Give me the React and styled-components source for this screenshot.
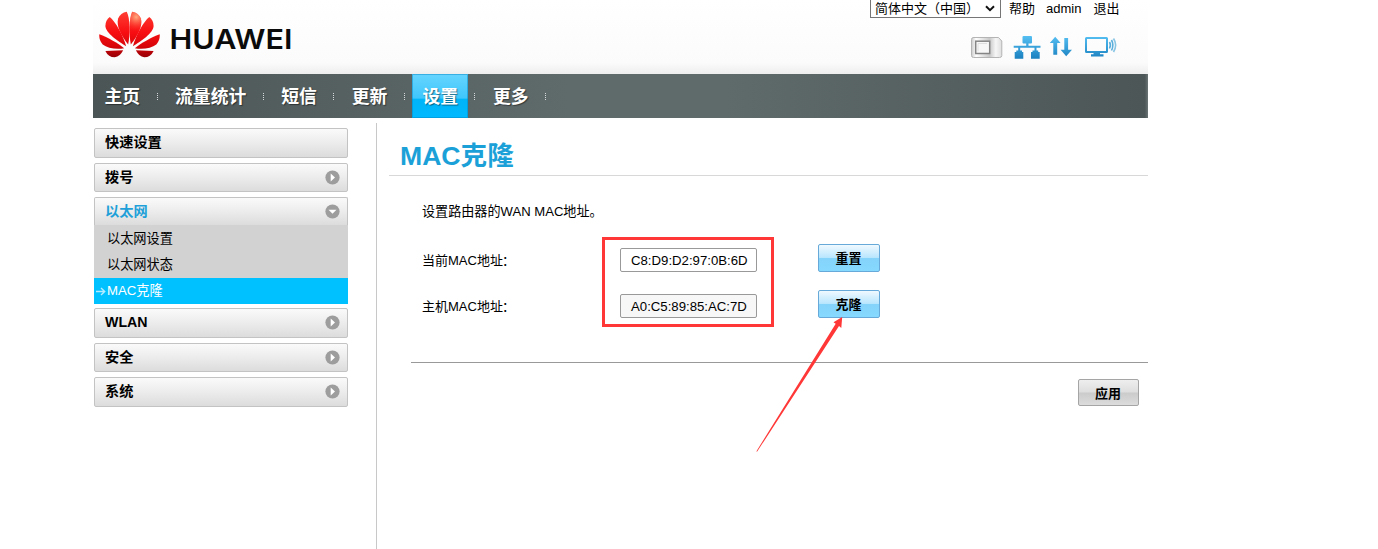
import React from "react";
import styled, { createGlobalStyle } from "styled-components";

const Global = createGlobalStyle`
  * { box-sizing: border-box; }
  html, body { margin: 0; padding: 0; background: #fff; overflow: hidden; }
  body { font: 13px "Liberation Sans", "Noto Sans CJK SC", sans-serif; color: #000; }
`;

const Page = styled.div`
  position: relative;
  width: 1055px;
  height: 549px;
  margin-left: 93px;
  display: flex;
  flex-direction: column;
`;

const Header = styled.header`
  height: 74px;
  display: flex;
  justify-content: space-between;
  background: linear-gradient(#fff, #fbfbfb 85%, #eeeeee);
`;

const Logo = styled.div`
  display: flex;
  align-items: flex-start;
  padding: 11px 0 0 6px;
  gap: 11px;
`;

const Tools = styled.div`
  width: 278px;
  display: flex;
  flex-direction: column;
`;

const TopLinks = styled.div`
  display: flex;
  align-items: center;
  height: 17px;
  line-height: 17px;
`;

const Select = styled.div`
  width: 131px;
  height: 19px;
  margin: -1px 8px 0 0;
  padding: 0 5px 0 4px;
  display: flex;
  align-items: center;
  justify-content: space-between;
  border: 1px solid #767676;
  background: #fff;
  white-space: nowrap;
`;

const TopLink = styled.a`
  margin-right: ${(p) => p.$gap || 0}px;
  white-space: nowrap;
`;

const Status = styled.div`
  display: flex;
  padding: 18px 0 0 100px;
`;

const Nav = styled.nav`
  height: 44px;
  display: flex;
  align-items: center;
  padding-left: 1px;
  background: linear-gradient(90deg, #4b5556, #5f6a6b 45%, #5f6a6b 60%, #4c5657 99.7%, #6b7475);
`;

const NavLink = styled.a`
  height: 44px;
  line-height: 45px;
  padding: 1px 10.5px 0;
  font-size: 17.8px;
  font-weight: bold;
  color: #fff;
  text-shadow: 1px 1px 1px rgba(0, 0, 0, 0.45);
  white-space: nowrap;
  background: ${(p) => (p.$active ? "linear-gradient(#66d5ff, #3fc6fb 55%, #00b4f8 57%, #00b9ff)" : "none")};
  box-shadow: ${(p) => (p.$active ? "inset 0 0 0 1px rgba(0,130,190,.45)" : "none")};
`;

const Dots = styled.i`
  width: 1px;
  height: 8px;
  margin: 2px 7px 0 6px;
  background: repeating-linear-gradient(#d5d9d9 0 1px, transparent 1px 2px);
`;

const Body = styled.div`
  flex: 1;
  display: flex;
  padding-top: 5px;
`;

const Sidebar = styled.aside`
  width: 283px;
  padding: 5px 28px 0 1px;
`;

const MenuItem = styled.div`
  height: ${(p) => p.$h}px;
  margin-bottom: ${(p) => (p.$open ? 0 : 5)}px;
  padding: 0 7px ${(p) => (p.$latin ? 2 : 4)}px 10px;
  display: flex;
  align-items: center;
  justify-content: space-between;
  font-size: 14.2px;
  font-weight: bold;
  color: ${(p) => (p.$open ? "#1fa0d8" : "#000")};
  border: 1px solid #c3c3c3;
  border-bottom-width: ${(p) => (p.$open ? 0 : 1)}px;
  border-radius: ${(p) => (p.$open ? "2px 2px 0 0" : "2px")};
  background: linear-gradient(#fafafa, #ececec 50%, #dcdcdc);
`;

const BulletIcon = styled.svg`
  flex: none;
  margin-top: ${(p) => (p.$latin ? 1 : 3)}px;
`;

const SubMenu = styled.div`
  margin-bottom: 4px;
  background: #d2d2d2;
`;

const SubItem = styled.div`
  height: ${(p) => p.$h || 26}px;
  display: flex;
  align-items: center;
  padding: 0 0 ${(p) => (p.$active ? 3 : 2)}px ${(p) => (p.$active ? 2 : 13)}px;
  gap: 1px;
  font-size: 13.2px;
  color: ${(p) => (p.$active ? "#fff" : "#000")};
  background: ${(p) => (p.$active ? "#00c1ff" : "transparent")};
`;

const SubArrow = styled.svg`
  margin-top: 3px;
`;

const Main = styled.main`
  flex: 1;
  border-left: 1px solid #c8c8c8;
  padding-left: 12px;
`;

const Title = styled.h1`
  margin: 0;
  height: 53px;
  padding: 15px 0 0 11px;
  font-size: 26.6px;
  line-height: 36px;
  font-weight: bold;
  color: #1ba1d8;
  border-bottom: 1px solid #d8d8d8;
`;

const Description = styled.p`
  margin: 0;
  padding: 27px 0 0 33px;
  font-size: 13.1px;
  line-height: 18px;
`;

const Form = styled.div`
  margin: 16px 0 0 22px;
  height: 126px;
  border-bottom: 1px solid #999;
`;

const Field = styled.div`
  display: flex;
  align-items: center;
  height: 46px;
  padding-left: 11px;
`;

const Label = styled.label`
  width: 198px;
  padding-bottom: 2px;
`;

const Colon = styled.span`
  margin-left: -1px;
`;

const Input = styled.div`
  width: 137px;
  height: 24px;
  line-height: 23px;
  padding-left: 10px;
  font-size: 13.2px;
  border: 1px solid #999;
  border-radius: 2px;
  background: ${(p) => (p.$muted ? "#f7f7f7" : "#fff")};
`;

const Button = styled.button`
  width: ${(p) => (p.$grey ? 61 : 62)}px;
  height: ${(p) => (p.$grey ? 27 : 28)}px;
  padding: 0 1px 1px 0;
  font: bold 13px "Liberation Sans", "Noto Sans CJK SC", sans-serif;
  color: #000;
  border: 1px solid ${(p) => (p.$grey ? "#a5a5a5" : "#67a9d8")};
  border-radius: 2px;
  background: ${(p) =>
    p.$grey
      ? "linear-gradient(#eeeeee, #dedede 48%, #cbcbcb 52%, #dcdcdc)"
      : "linear-gradient(#f0f9ff, #b9e6fd 48%, #84d3fb 52%, #86d9ff)"};
`;

const FieldButton = styled(Button)`
  margin: -4px 0 0 61px;
`;

const Actions = styled.div`
  display: flex;
  justify-content: flex-end;
  padding: 16px 9px 0 0;
`;

const Highlight = styled.div`
  position: absolute;
  left: 509px;
  top: 237px;
  width: 172px;
  height: 90px;
  border: 3px solid #ff3737;
`;

const Pointer = styled.svg`
  position: absolute;
  left: 657px;
  top: 310px;
`;

const Bullet = ({ down, latin }) => (
  <BulletIcon $latin={latin} width="15" height="15" viewBox="0 0 15 15">
    <circle cx="7.5" cy="7.5" r="7.1" fill="#9d9d9d" />
    <path d={down ? "M3.5 5.7H11.5L7.5 9.8Z" : "M5.7 3.5V11.5L10 7.5Z"} fill="#fff" />
  </BulletIcon>
);

const Petals = () => (
  <>
    <path d="M114 132C92 103 78 76 84 54Q91 37 110 34C120 54 120 102 114 132Z" />
    <path d="M108 137C84 123 47 98 46 77Q46 60 59 50C76 63 99 105 108 137Z" />
    <path d="M102 143C78 147 52 143 38 132Q26 118 28 101C53 110 86 129 102 143Z" />
    <path d="M99 149L46 151Q55 170 74 170Q90 168 99 149Z" />
  </>
);

const Brand = () => (
  <Logo>
    <svg width="61" height="47" viewBox="27 33 182 138">
      <defs>
        <linearGradient id="petal" gradientUnits="userSpaceOnUse" x1="0" y1="33" x2="0" y2="170">
          <stop offset="0" stopColor="#ff4034" />
          <stop offset=".45" stopColor="#f80e12" />
          <stop offset=".75" stopColor="#d9060a" />
          <stop offset="1" stopColor="#960006" />
        </linearGradient>
        <radialGradient id="glow" gradientUnits="userSpaceOnUse" cx="98" cy="50" r="42">
          <stop offset="0" stopColor="#ffc090" stopOpacity=".85" />
          <stop offset="1" stopColor="#ff3020" stopOpacity="0" />
        </radialGradient>
      </defs>
      <g fill="url(#petal)"><Petals /></g>
      <g transform="translate(236 0) scale(-1 1)">
        <g fill="url(#petal)"><Petals /></g>
        <path d="M114 132C92 103 78 76 84 54Q91 37 110 34C120 54 120 102 114 132Z" fill="url(#glow)" />
      </g>
    </svg>
    <svg width="124" height="46" viewBox="0 0 124 46">
      <text x="-1.5" y="38" fontFamily="Inter, sans-serif" fontSize="27" fontWeight="600" fill="#0b0b0b" textLength="123" lengthAdjust="spacingAndGlyphs">HUAWEI</text>
    </svg>
  </Logo>
);

const StatusIcons = () => (
  <svg width="148" height="26" viewBox="970 35 148 26">
    <defs>
      <linearGradient id="blue" gradientUnits="userSpaceOnUse" x1="0" y1="36" x2="0" y2="59">
        <stop offset="0" stopColor="#55bff3" />
        <stop offset="1" stopColor="#1a80bf" />
      </linearGradient>
      <linearGradient id="silver" x1="0" y1="0" x2="1" y2="0">
        <stop offset="0" stopColor="#c9c9c9" />
        <stop offset=".15" stopColor="#fff" />
        <stop offset=".6" stopColor="#c8c8c8" />
        <stop offset=".8" stopColor="#f6f6f6" />
        <stop offset="1" stopColor="#dedede" />
      </linearGradient>
    </defs>
    <path d="M973 37.5H998.5L1001.8 41V55.5Q1001.8 57.5 999.5 57.5H973.5Q971.5 57.5 971.5 55.5V39.5Q971.5 37.5 973.5 37.5Z" fill="url(#silver)" stroke="#b4b4b4" />
    <rect x="975.7" y="41.2" width="14" height="12.3" fill="#f7f7f7" stroke="#858585" strokeWidth="1.5" />
    <path d="M978 51.5V43.5H987" fill="none" stroke="#dedede" />
    <g fill="url(#blue)">
      <rect x="1022.5" y="36" width="9.5" height="7.5" rx="1" />
      <path d="M1026.2 43H1028.5V45.7H1040.5V47.7H1036.5V51H1034.5V47.7H1020.2V51H1018.2V47.7H1013.7V45.7H1026.2Z" />
      <path d="M1016.3 50.5H1022V52H1023.3V58.7H1014.7V52H1016.3Z" />
      <path d="M1032.5 50.5H1038.2V52H1039.7V58.7H1031V52H1032.5Z" />
      <path d="M1055.2 36.8L1060.6 43H1057.2V54.8H1053.3V43H1049.8Z" />
      <path d="M1064.3 38H1068.1V49.7H1072L1066.2 56.2L1060.6 49.7H1064.3Z" />
      <path fillRule="evenodd" d="M1086.5 37H1106.5Q1108 37 1108 38.5V51.5Q1108 53 1106.5 53H1086.5Q1085 53 1085 51.5V38.5Q1085 37 1086.5 37ZM1087 39V51H1106V39Z" />
      <path d="M1093.5 53H1100V54.3H1103.5V56.5H1091V54.3H1093.5Z" />
    </g>
    <g fill="none" stroke="#5aaedb" strokeWidth="1.6">
      <path d="M1109.5 42Q1111.3 45 1109.5 48.5" />
      <path d="M1111.5 40Q1114.2 45 1111.5 50.5" />
      <path d="M1113.5 38.5Q1117.8 45 1113.5 52" stroke="#8ac5e4" />
    </g>
  </svg>
);

const navItems = ["主页", "流量统计", "短信", "更新", "设置", "更多"];

export default function App() {
  return (
    <>
      <Global />
      <Page>
        <Header>
          <Brand />
          <Tools>
            <TopLinks>
              <Select>
                <span>简体中文（中国）</span>
                <svg width="10" height="7" viewBox="0 0 10 7">
                  <path d="M1 1.3L5 5.2L9 1.3" fill="none" stroke="#111" strokeWidth="2" />
                </svg>
              </Select>
              <TopLink $gap={11}>帮助</TopLink>
              <TopLink $gap={12}>admin</TopLink>
              <TopLink>退出</TopLink>
            </TopLinks>
            <Status><StatusIcons /></Status>
          </Tools>
        </Header>
        <Nav>
          {navItems.map((n) => (
            <React.Fragment key={n}>
              <NavLink $active={n === "设置"}>{n}</NavLink>
              <Dots />
            </React.Fragment>
          ))}
        </Nav>
        <Body>
          <Sidebar>
            <MenuItem $h={30}>快速设置</MenuItem>
            <MenuItem $h={29}>拨号<Bullet /></MenuItem>
            <MenuItem $h={28} $open>以太网<Bullet down /></MenuItem>
            <SubMenu>
              <SubItem>以太网设置</SubItem>
              <SubItem $h={27}>以太网状态</SubItem>
              <SubItem $active>
                <SubArrow width="10" height="9" viewBox="0 0 10 9">
                  <path d="M0 4.5H8.5M5 1L8.7 4.5L5 8" fill="none" stroke="#b5ebff" strokeWidth="1.4" />
                </SubArrow>
                MAC克隆
              </SubItem>
            </SubMenu>
            <MenuItem $h={30} $latin>WLAN<Bullet latin /></MenuItem>
            <MenuItem $h={29}>安全<Bullet /></MenuItem>
            <MenuItem $h={30}>系统<Bullet /></MenuItem>
          </Sidebar>
          <Main>
            <Title>MAC克隆</Title>
            <Description>设置路由器的WAN MAC地址。</Description>
            <Form>
              <Field>
                <Label>当前MAC地址<Colon>：</Colon></Label>
                <Input>C8:D9:D2:97:0B:6D</Input>
                <FieldButton>重置</FieldButton>
              </Field>
              <Field>
                <Label>主机MAC地址<Colon>：</Colon></Label>
                <Input $muted>A0:C5:89:85:AC:7D</Input>
                <FieldButton>克隆</FieldButton>
              </Field>
            </Form>
            <Actions><Button $grey>应用</Button></Actions>
          </Main>
        </Body>
        <Highlight />
        <Pointer width="100" height="145" viewBox="750 310 100 145">
          <path d="M756.3 451.5L835.7 323.7L833.5 322.3L842.2 317L841.3 328L839 326L757.2 451.5Z" fill="#ff3737" />
        </Pointer>
      </Page>
    </>
  );
}
